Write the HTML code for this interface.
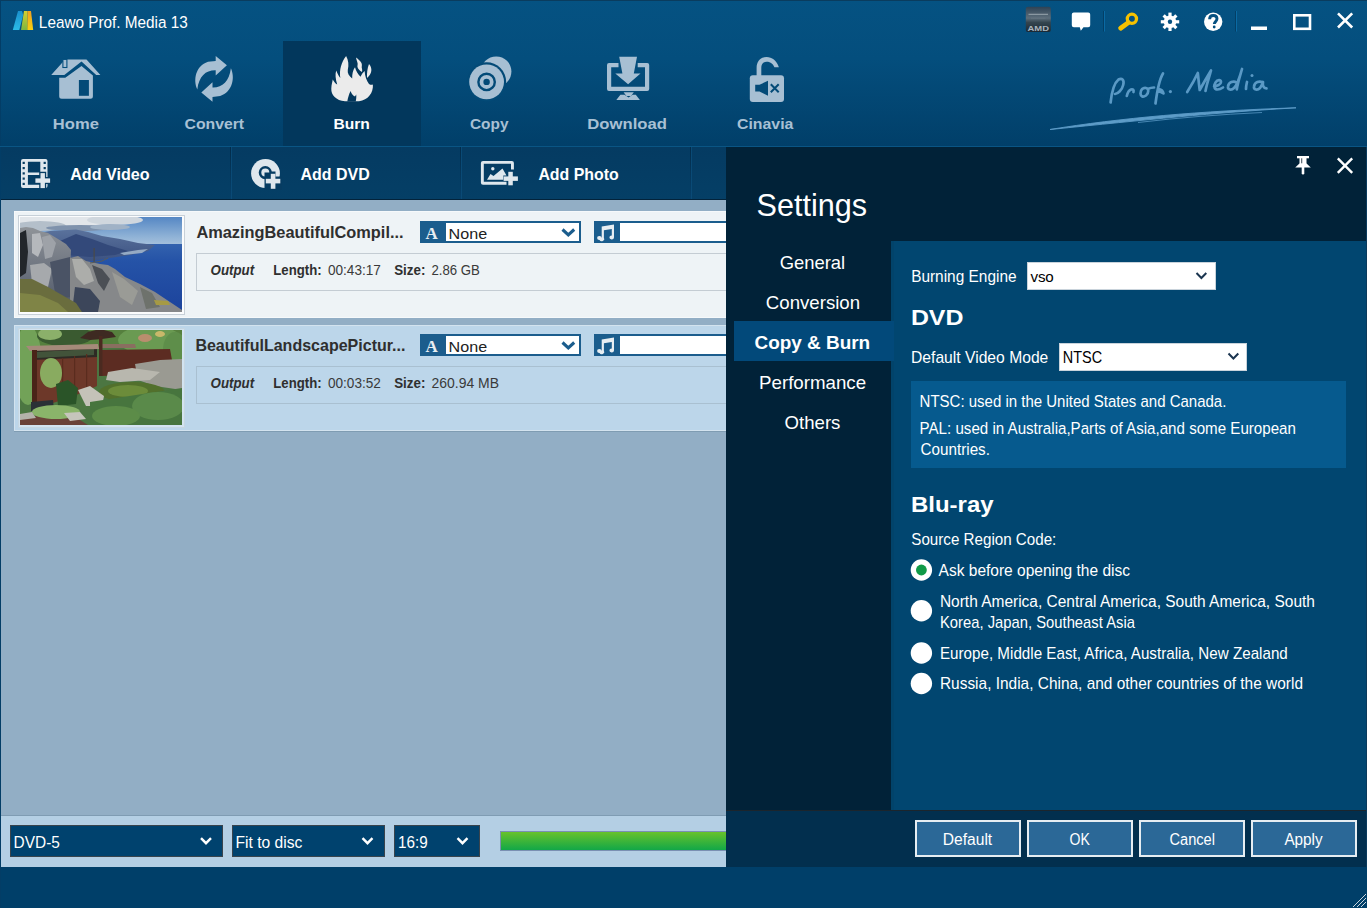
<!DOCTYPE html>
<html><head><meta charset="utf-8">
<style>
*{margin:0;padding:0;box-sizing:border-box}
html,body{width:1367px;height:908px;overflow:hidden;background:#003f69;font-family:"Liberation Sans",sans-serif}
.a{position:absolute}
.t{position:absolute;white-space:nowrap;line-height:1}
svg{position:absolute;overflow:visible}
</style></head><body>

<div class="a" style="left:0;top:0;width:1367px;height:147px;background:linear-gradient(#055282 0%,#044e7d 40%,#013f69 100%)"></div>
<div class="a" style="left:0;top:0;width:1367px;height:1px;background:#0a3c5e"></div>
<div class="a" style="left:0;top:0;width:1px;height:908px;background:#033d66"></div>
<div class="a" style="left:283px;top:41px;width:138px;height:106px;background:#02375c"></div>
<div class="a" style="left:0;top:146px;width:1367px;height:1px;background:#0a5584"></div>
<div class="a" style="left:1px;top:147px;width:725px;height:53px;background:linear-gradient(#053b62,#053f66)"></div>
<div class="a" style="left:1px;top:199px;width:725px;height:1px;background:#03233b"></div>
<div class="a" style="left:230px;top:147px;width:1px;height:52px;background:linear-gradient(#032c4a,#06406a)"></div><div class="a" style="left:231px;top:147px;width:1px;height:52px;background:#0a4a76"></div>
<div class="a" style="left:460px;top:147px;width:1px;height:52px;background:linear-gradient(#032c4a,#06406a)"></div><div class="a" style="left:461px;top:147px;width:1px;height:52px;background:#0a4a76"></div>
<div class="a" style="left:690px;top:147px;width:1px;height:52px;background:linear-gradient(#032c4a,#06406a)"></div><div class="a" style="left:691px;top:147px;width:1px;height:52px;background:#0a4a76"></div>
<div class="a" style="left:1px;top:200px;width:725px;height:615px;background:#92aec5"></div>
<div class="a" style="left:1px;top:815px;width:725px;height:1px;background:#7f9cb3"></div>
<div class="a" style="left:1px;top:816px;width:725px;height:51px;background:#b4cfe4"></div>
<div class="a" style="left:1px;top:867px;width:1366px;height:41px;background:#003f69"></div>
<div class="a" style="left:726px;top:147px;width:641px;height:720px;background:#012238"></div>
<div class="a" style="left:891px;top:241px;width:475px;height:569px;background:#014670"></div><div class="a" style="left:891px;top:241px;width:3px;height:569px;background:#02436a"></div>
<div class="a" style="left:734px;top:321px;width:160px;height:40px;background:#02497a"></div>
<div class="a" style="left:726px;top:810px;width:640px;height:57px;background:#022f4e;border-top:1px solid #1c252c"></div>
<div class="a" style="left:1366px;top:147px;width:1px;height:720px;background:#0a3a5c"></div>

<!-- file items -->
<div class="a" style="left:14px;top:211px;width:712px;height:107px;background:#eef3f6;border:1px solid #f6f9fb;border-right:none"></div>
<div class="a" style="left:18px;top:215px;width:167px;height:100px;background:#fbfcfd;border:1px solid #c7d0d8"></div>
<div class="a" style="left:196px;top:253px;width:530px;height:38px;border:1px solid #c4ccd3;border-right:none"></div>

<div class="a" style="left:14px;top:325px;width:712px;height:106px;background:#bcd6ea;border:1px solid #d3e3ef;border-right:none"></div><div class="a" style="left:14px;top:431px;width:712px;height:1px;background:#7f9cb2"></div>
<div class="a" style="left:18px;top:328px;width:167px;height:100px;background:#d2e3f0;border:1px solid #c5d6e2"></div>
<div class="a" style="left:196px;top:366px;width:530px;height:38px;border:1px solid #a9c0d1;border-right:none"></div>

<!-- subtitle/audio combos -->
<div class="a" style="left:420px;top:221px;width:161px;height:22px;background:#fff;border:2px solid #1b5d8d"></div>
<div class="a" style="left:420px;top:221px;width:26px;height:22px;background:#1b5d8d"></div>
<div class="a" style="left:594px;top:221px;width:132px;height:22px;background:#fff;border:2px solid #1b5d8d;border-right:none"></div>
<div class="a" style="left:594px;top:221px;width:26px;height:22px;background:#1b5d8d"></div>
<div class="a" style="left:420px;top:334px;width:161px;height:22px;background:#fff;border:2px solid #1b5d8d"></div>
<div class="a" style="left:420px;top:334px;width:26px;height:22px;background:#1b5d8d"></div>
<div class="a" style="left:594px;top:334px;width:132px;height:22px;background:#fff;border:2px solid #1b5d8d;border-right:none"></div>
<div class="a" style="left:594px;top:334px;width:26px;height:22px;background:#1b5d8d"></div>

<!-- bottom combos -->
<div class="a" style="left:10px;top:825px;width:213px;height:32px;background:#00426e;border:1px solid #39444d"></div>
<div class="a" style="left:232px;top:825px;width:153px;height:32px;background:#00426e;border:1px solid #39444d"></div>
<div class="a" style="left:394px;top:825px;width:86px;height:32px;background:#00426e;border:1px solid #39444d"></div>
<div class="a" style="left:500px;top:831px;width:226px;height:20px;background:linear-gradient(#68c22a,#12a748);border:1px solid #7a90b2;border-right:none"></div>

<!-- settings combos -->
<div class="a" style="left:1027px;top:262px;width:189px;height:28px;background:#fff;border:1px solid #c9d3db"></div>
<div class="a" style="left:1059px;top:343px;width:188px;height:28px;background:#fff;border:1px solid #c9d3db"></div>
<div class="a" style="left:911px;top:381px;width:435px;height:87px;background:#065a8e"></div>

<!-- buttons -->
<div class="a" style="left:915px;top:820px;width:106px;height:37px;background:#2b6897;border:2px solid #e6edf2"></div>
<div class="a" style="left:1027px;top:820px;width:106px;height:37px;background:#2b6897;border:2px solid #e6edf2"></div>
<div class="a" style="left:1139px;top:820px;width:106px;height:37px;background:#2b6897;border:2px solid #e6edf2"></div>
<div class="a" style="left:1251px;top:820px;width:106px;height:37px;background:#2b6897;border:2px solid #e6edf2"></div>
<svg style="left:0;top:0;font-family:'Liberation Sans'" width="1367" height="908">
<text transform="translate(38.87 27.80) scale(0.9289 1)" fill="#fff" style="font-size:16.5px;">Leawo Prof. Media 13</text>
<text transform="translate(52.81 128.70) scale(1.0883 1)" fill="#a8c0d4" style="font-size:15.25px;font-weight:bold;">Home</text>
<text transform="translate(184.50 128.70) scale(1.0340 1)" fill="#a8c0d4" style="font-size:15.25px;font-weight:bold;">Convert</text>
<text transform="translate(333.48 128.90) scale(1.0244 1)" fill="#fff" style="font-size:15.25px;font-weight:bold;">Burn</text>
<text transform="translate(470.00 128.70) scale(1.0092 1)" fill="#a8c0d4" style="font-size:15.25px;font-weight:bold;">Copy</text>
<text transform="translate(587.31 128.70) scale(1.0945 1)" fill="#a8c0d4" style="font-size:15.25px;font-weight:bold;">Download</text>
<text transform="translate(737.00 128.70) scale(1.0390 1)" fill="#a8c0d4" style="font-size:15.25px;font-weight:bold;">Cinavia</text>
<text transform="translate(70.20 179.90) scale(0.9778 1)" fill="#fff" style="font-size:16.5px;font-weight:bold;">Add Video</text>
<text transform="translate(300.40 179.90) scale(0.9696 1)" fill="#fff" style="font-size:16.5px;font-weight:bold;">Add DVD</text>
<text transform="translate(538.40 179.90) scale(0.9638 1)" fill="#fff" style="font-size:16.5px;font-weight:bold;">Add Photo</text>
<text transform="translate(196.40 237.70) scale(1.0395 1)" fill="#2f2f2f" style="font-size:15.75px;font-weight:bold;">AmazingBeautifulCompil...</text>
<text transform="translate(210.60 274.70) scale(0.9324 1)" fill="#2f2f2f" style="font-size:14.25px;font-weight:bold;font-style:italic;">Output</text>
<text transform="translate(273.30 274.70) scale(0.9264 1)" fill="#2f2f2f" style="font-size:14.25px;font-weight:bold;">Length:</text>
<text transform="translate(328.00 274.70) scale(0.9542 1)" fill="#3a3a3a" style="font-size:14.25px;">00:43:17</text>
<text transform="translate(394.20 274.70) scale(0.9381 1)" fill="#2f2f2f" style="font-size:14.25px;font-weight:bold;">Size:</text>
<text transform="translate(431.50 274.70) scale(0.9270 1)" fill="#3a3a3a" style="font-size:14.25px;">2.86 GB</text>
<text transform="translate(448.60 238.50) scale(1.0952 1)" fill="#222" style="font-size:14.75px;">None</text>
<text transform="translate(195.38 350.70) scale(1.0186 1)" fill="#2f2f2f" style="font-size:15.75px;font-weight:bold;">BeautifulLandscapePictur...</text>
<text transform="translate(210.60 387.70) scale(0.9324 1)" fill="#2f2f2f" style="font-size:14.25px;font-weight:bold;font-style:italic;">Output</text>
<text transform="translate(273.30 387.70) scale(0.9264 1)" fill="#2f2f2f" style="font-size:14.25px;font-weight:bold;">Length:</text>
<text transform="translate(328.00 387.70) scale(0.9542 1)" fill="#3a3a3a" style="font-size:14.25px;">00:03:52</text>
<text transform="translate(394.20 387.70) scale(0.9381 1)" fill="#2f2f2f" style="font-size:14.25px;font-weight:bold;">Size:</text>
<text transform="translate(431.50 387.70) scale(0.9793 1)" fill="#3a3a3a" style="font-size:14.25px;">260.94 MB</text>
<text transform="translate(448.60 351.50) scale(1.0952 1)" fill="#222" style="font-size:14.75px;">None</text>
<text transform="translate(13.62 847.90) scale(0.9807 1)" fill="#fff" style="font-size:15.75px;">DVD-5</text>
<text transform="translate(235.51 847.90) scale(0.9922 1)" fill="#fff" style="font-size:15.75px;">Fit to disc</text>
<text transform="translate(398.03 847.90) scale(0.9701 1)" fill="#fff" style="font-size:15.75px;">16:9</text>
<text transform="translate(756.54 216.00) scale(0.9567 1)" fill="#fff" style="font-size:32.0px;">Settings</text>
<text transform="translate(779.70 269.00) scale(0.9567 1)" fill="#fff" style="font-size:19.25px;">General</text>
<text transform="translate(765.80 309.00) scale(0.9694 1)" fill="#fff" style="font-size:19.25px;">Conversion</text>
<text transform="translate(754.50 349.00) scale(0.9840 1)" fill="#fff" style="font-size:19.25px;font-weight:bold;">Copy &amp; Burn</text>
<text transform="translate(759.03 389.00) scale(0.9724 1)" fill="#fff" style="font-size:19.25px;">Performance</text>
<text transform="translate(784.50 429.00) scale(0.9677 1)" fill="#fff" style="font-size:19.25px;">Others</text>
<text transform="translate(911.14 282.10) scale(0.9639 1)" fill="#fff" style="font-size:16.0px;">Burning Engine</text>
<text transform="translate(1030.60 282.10) scale(0.9787 1)" fill="#000" style="font-size:15.5px;letter-spacing:-0.300px;">vso</text>
<text transform="translate(910.91 325.00) scale(1.0943 1)" fill="#fff" style="font-size:22.75px;font-weight:bold;">DVD</text>
<text transform="translate(911.02 362.70) scale(0.9796 1)" fill="#fff" style="font-size:16.0px;">Default Video Mode</text>
<text transform="translate(1062.70 362.70) scale(0.9048 1)" fill="#000" style="font-size:16.0px;">NTSC</text>
<text transform="translate(919.58 406.90) scale(0.9241 1)" fill="#fff" style="font-size:16.25px;">NTSC: used in the United States and Canada.</text>
<text transform="translate(919.57 433.60) scale(0.9316 1)" fill="#fff" style="font-size:16.25px;">PAL: used in Australia,Parts of Asia,and some European</text>
<text transform="translate(920.50 454.70) scale(0.9382 1)" fill="#fff" style="font-size:16.25px;">Countries.</text>
<text transform="translate(910.95 511.80) scale(1.0550 1)" fill="#fff" style="font-size:22.75px;font-weight:bold;">Blu-ray</text>
<text transform="translate(911.30 545.00) scale(0.9489 1)" fill="#fff" style="font-size:16.0px;">Source Region Code:</text>
<text transform="translate(938.60 575.90) scale(0.9698 1)" fill="#fff" style="font-size:16.0px;">Ask before opening the disc</text>
<text transform="translate(939.93 607.00) scale(0.9676 1)" fill="#fff" style="font-size:16.0px;">North America, Central America, South America, South</text>
<text transform="translate(939.97 628.00) scale(0.9251 1)" fill="#fff" style="font-size:16.0px;">Korea, Japan, Southeast Asia</text>
<text transform="translate(939.95 658.60) scale(0.9501 1)" fill="#fff" style="font-size:16.0px;">Europe, Middle East, Africa, Australia, New Zealand</text>
<text transform="translate(939.93 689.00) scale(0.9655 1)" fill="#fff" style="font-size:16.0px;">Russia, India, China, and other countries of the world</text>
<text transform="translate(942.74 845.00) scale(0.9613 1)" fill="#fff" style="font-size:16.25px;">Default</text>
<text transform="translate(1069.50 845.00) scale(0.8672 1)" fill="#fff" style="font-size:16.25px;">OK</text>
<text transform="translate(1169.50 845.00) scale(0.8985 1)" fill="#fff" style="font-size:16.25px;">Cancel</text>
<text transform="translate(1284.40 845.00) scale(0.9392 1)" fill="#fff" style="font-size:16.25px;">Apply</text>
</svg><!-- logo -->
<svg style="left:0;top:0" width="1367" height="147" viewBox="0 0 1367 147">
<defs>
<linearGradient id="lgb" x1="0" y1="0" x2="0" y2="1"><stop offset="0" stop-color="#1a8fcc"/><stop offset="1" stop-color="#2bbbe8"/></linearGradient>
<linearGradient id="lgg" x1="0" y1="0" x2="0" y2="1"><stop offset="0" stop-color="#d6d030"/><stop offset="1" stop-color="#7cb540"/></linearGradient>
<linearGradient id="lgy" x1="0" y1="0" x2="0" y2="1"><stop offset="0" stop-color="#f0a020"/><stop offset="1" stop-color="#f8d010"/></linearGradient>
</defs>
<polygon points="12.8,30 18,11 22,11 23.2,15 19.3,30" fill="url(#lgb)"/>
<polygon points="21,30 24,11 27.6,11 27.3,30" fill="url(#lgg)"/>
<polygon points="27.3,30 27.6,11 31,11 33.2,30" fill="url(#lgy)"/>

<!-- home -->
<g fill="#a7bfd3">
<polygon points="51.2,74.9 65.1,59.4 86.5,59.4 100.4,74.9 96.2,74.9 81.5,61.4 64.3,74.9"/>
<path d="M59.2,77.8 L65.3,77.8 L81.5,65.9 L92.9,75.6 L92.9,96.2 Q92.9,98.7 90.4,98.7 L61.7,98.7 Q59.2,98.7 59.2,96.2 Z"/>
<rect x="62.9" y="59.4" width="4" height="8.1" stroke="#054f7e" stroke-width="1.1"/>
</g>
<rect x="78.9" y="80" width="10" height="15.8" fill="#044a77"/>

<!-- convert -->
<g fill="#a7bfd3">
<path id="cva" d="M197.3,89.5 C193,80 195.5,66 208,61.8 L215.7,60.9 L215.7,56.1 L226.9,65.3 L215.7,75.6 L215.7,70.3 C206,70 199,76 197.3,89.5 Z"/>
<use href="#cva" transform="rotate(180 214.1 78.9)"/>
</g>

<!-- burn flame -->
<g transform="translate(325 50)">
<path fill="#ebebeb" d="M20,51.3 C11,50.5 6,45 6.3,38.5 C6.5,34 7.5,31.5 7.7,29.4 C9,31.5 10.5,33.5 12.2,34.5 C10.5,29 10,24 11.2,20.4 C12.5,23.5 13.8,26 15.3,28 C14,20 16.5,12 21.1,6 C23.5,10 24,15 22.8,20 C22.2,23 24,26 27.2,28.4 C27,24 28,20 30,17.3 C31,21 33,24.5 35.5,26.8 C36.5,24.5 38,22.5 39.6,21 C40,26 41.5,31 44,33.9 C45.5,35 46.8,35 47.9,34.5 C48.5,43 43,50 34,51.3 Z"/>
<path fill="#ebebeb" d="M31,7.5 C35,10.5 37.5,13 36.8,16 C36.3,18 37.8,19.5 37,22 C33.8,20 31.8,17.5 32.6,15 C33.2,13 31.5,10.5 31,7.5 Z"/>
<path fill="#ebebeb" d="M44,14 C47.5,18 47.3,23.5 42,28 C41.8,23 42.3,18 44,14 Z"/>
<path fill="#02375c" d="M22.3,51.5 C23,47.5 24,44 25.6,41 C26.5,44 28,45.5 30,46.5 L31.2,44.5 C31.5,47 31.2,49.5 30.7,51.5 Z"/>
</g>

<!-- copy -->
<g>
<circle cx="496.2" cy="71.6" r="15.2" fill="#a7bfd3"/>
<circle cx="486.6" cy="81.9" r="19.6" fill="#034a77"/>
<circle cx="486.6" cy="81.9" r="17.4" fill="#a7bfd3"/>
<circle cx="486.6" cy="81.9" r="8.2" fill="none" stroke="#034a77" stroke-width="2.4"/>
<circle cx="486.6" cy="81.9" r="3.2" fill="#034a77"/>
</g>

<!-- download -->
<g fill="#a7bfd3">
<path fill-rule="evenodd" d="M609,63.1 L618.5,63.1 L618.5,67.3 L611.2,67.3 L611.2,86.7 L645,86.7 L645,67.3 L637.7,67.3 L637.7,63.1 L647.2,63.1 Q649.2,63.1 649.2,65.1 L649.2,88.9 Q649.2,90.9 647.2,90.9 L609,90.9 Q607,90.9 607,88.9 L607,65.1 Q607,63.1 609,63.1 Z"/>
<polygon points="619.2,56.7 637,56.7 633.8,73.6 640.5,73.6 628.1,84.2 615.3,73.6 622.4,73.6"/>
<polygon points="623.6,92.2 633.8,92.2 631,96 626.4,96"/>
<polygon points="620.4,94.8 624.5,94.8 628.6,97.5 632.5,94.8 635.8,94.8 639.9,100.1 616.3,100.1"/>
</g>

<!-- cinavia -->
<g>
<path d="M756.6,77 L756.6,68 C756.6,61 761,57 766.6,57 C772,57 776.5,60.5 778.9,67.2 L774.4,67.2 C772.5,63 770,61.7 766.6,61.7 C763,61.7 761.3,64 761.3,68 L761.3,77 Z" fill="#a7bfd3"/>
<rect x="749.8" y="75.2" width="34.2" height="26.8" rx="3" fill="#a7bfd3"/>
<polygon points="755.2,84.8 759.5,84.8 768,80.7 768,95.7 759.5,91.5 755.2,91.5" fill="#034a77"/>
<path d="M770.8,84.3 L778.7,92.3 M778.7,84.3 L770.8,92.3" stroke="#034a77" stroke-width="2" fill="none"/>
</g>

<!-- top right icons -->
<defs>
<linearGradient id="amd" x1="0" y1="0" x2="0" y2="1"><stop offset="0" stop-color="#2e4254"/><stop offset="0.45" stop-color="#5d6e7b"/><stop offset="0.62" stop-color="#34454f"/><stop offset="1" stop-color="#1a2834"/></linearGradient>
</defs>
<rect x="1025.8" y="6.7" width="25" height="25.4" rx="2" fill="url(#amd)"/>
<rect x="1028.5" y="13.8" width="19.5" height="1" fill="#9aa6ae"/>
<rect x="1031" y="17.8" width="14.5" height="0.6" fill="#6c7a85"/>
<text x="1027.5" y="31" font-family="Liberation Sans" font-weight="bold" font-size="7.5" fill="#a9b4bc" textLength="21.5" lengthAdjust="spacingAndGlyphs">AMD</text>
<path d="M1073.8,12.5 L1088.2,12.5 Q1090.2,12.5 1090.2,14.5 L1090.2,25.2 Q1090.2,27.2 1088.2,27.2 L1083.5,27.2 L1080.8,30.7 L1079.8,27.2 L1073.8,27.2 Q1071.8,27.2 1071.8,25.2 L1071.8,14.5 Q1071.8,12.5 1073.8,12.5 Z" fill="#fff"/>
<rect x="1103" y="11" width="1" height="20.5" fill="#033f66"/><rect x="1104" y="11" width="1" height="20.5" fill="#0a6aa4"/>
<rect x="1235" y="11" width="1" height="20.5" fill="#033f66"/><rect x="1236" y="11" width="1" height="20.5" fill="#0a6aa4"/>
<g fill="none" stroke="#f6c100">
<circle cx="1131.9" cy="18.8" r="4.6" stroke-width="3.3"/>
<line x1="1128.3" y1="22.6" x2="1120.6" y2="28.2" stroke-width="4.8" stroke-linecap="round"/>
</g>
<g transform="translate(1170 21.8)" fill="#fff">
<circle r="6.3" />
<rect x="-1.6" y="-9.2" width="3.2" height="18.4"/>
<rect x="-9.2" y="-1.6" width="18.4" height="3.2"/>
<rect x="-1.6" y="-9" width="3.2" height="18" transform="rotate(45)"/>
<rect x="-1.6" y="-9" width="3.2" height="18" transform="rotate(-45)"/>
<circle r="2.2" fill="#055080"/>
</g>
<circle cx="1213.2" cy="21.8" r="9.2" fill="#fff"/>
<path d="M1209.6,19.3 C1209.6,16.8 1211.2,15.5 1213.3,15.5 C1215.6,15.5 1217,16.9 1217,18.8 C1217,21.2 1214.4,21.6 1214.3,24" fill="none" stroke="#055080" stroke-width="2.9"/>
<circle cx="1214.2" cy="27" r="1.4" fill="#055080"/>
<rect x="1251" y="26.5" width="16" height="3.5" fill="#fff"/>
<rect x="1294.3" y="15.3" width="15.7" height="13.5" fill="none" stroke="#fff" stroke-width="2.6"/>
<path d="M1338,13.3 L1352.2,27.5 M1352.2,13.3 L1338,27.5" stroke="#fff" stroke-width="2.6" fill="none"/>

<!-- prof media logo -->
<g fill="none" stroke="#5a99c5" stroke-width="2.7" stroke-linecap="round" stroke-linejoin="round">
<path d="M1110.6,102.5 C1111.5,94 1113,84 1118.5,79.5 C1122,77.5 1124.5,80 1123.2,85 C1122,90 1118,93.5 1115,94"/>
<path d="M1126.8,96 C1127.5,93 1128.5,90.5 1131,89.5 C1133,89 1134,90 1133.5,92"/>
<path d="M1140.5,93.5 C1140.5,89.5 1143,87.5 1146,88 C1149,88.5 1149,93 1146,95.5 C1143,97.5 1140.5,96.5 1140.5,93.5 Z M1147.5,89 C1150,88 1152,87.5 1154,87.5"/>
<path d="M1163,73.5 C1159,80 1157,92 1155.5,103.5 M1159,89 C1161.5,89.5 1163,91 1163.5,93.5 C1162,92.5 1160,91.5 1158.5,91.5"/>
<path d="M1187.2,92 C1191,86 1195,79 1197.8,73 C1198.5,79 1199,85 1199.7,90 C1203,84 1207,77 1211,70.5 C1209,78 1206.5,85 1205.5,91"/>
<path d="M1214,86 C1217,86 1221,84.5 1221,82 C1221,79.5 1217.5,79.5 1215.5,82.5 C1213.5,85.5 1214,89.5 1217.5,89.5 C1219.5,89.5 1221.5,88.5 1223,87.5"/>
<path d="M1236.5,82.5 C1233.5,80.5 1228.5,82 1228,86.5 C1227.5,90 1231.5,90.5 1234,88 C1237,85 1239.5,78 1242,69 C1240,76 1237.5,84 1236.8,89.3"/>
<path d="M1247,82 C1246.5,84 1246,87 1246,89"/>
<path d="M1262.5,82.5 C1259.5,80.5 1254.5,82 1254,86.5 C1253.5,90 1257.5,90.5 1260,88 C1261.5,86 1262.5,84 1263,82 C1262.5,85 1263,88 1266.5,88.3"/>
</g>
<circle cx="1170.4" cy="91.6" r="1.6" fill="#5a99c5"/>
<circle cx="1252" cy="75.4" r="1.5" fill="#5a99c5"/>
<path d="M1050,129.5 C1120,118 1200,111 1296,107.8 C1210,113 1150,119.5 1050,129.5 Z" fill="#5d9cc8" stroke="#5d9cc8" stroke-width="0.9"/>
<path d="M1138,122.5 C1180,117.5 1220,114.5 1262,112.5" stroke="#4e8dba" stroke-width="0.9" fill="none"/>
</svg>
<svg style="left:0;top:0" width="1367" height="908" viewBox="0 0 1367 908">
<!-- add video -->
<path fill="#dfe7ed" fill-rule="evenodd" d="M23,159 L45.5,159 Q47.5,159 47.5,161 L47.5,186 Q47.5,188 45.5,188 L23,188 Q21,188 21,186 L21,161 Q21,159 23,159 Z M27.9,161.7 L40.3,161.7 L40.3,172.5 L27.9,172.5 Z M27.9,175 L40.3,175 L40.3,184.8 L27.9,184.8 Z"/>
<g fill="#063c62">
<rect x="22.6" y="161.8" width="2.2" height="2.2"/><rect x="22.6" y="167" width="2.2" height="2.2"/><rect x="22.6" y="172.3" width="2.2" height="2.2"/><rect x="22.6" y="177.5" width="2.2" height="2.2"/><rect x="22.6" y="182.8" width="2.2" height="2.2"/>
<rect x="43.6" y="161.8" width="2.2" height="2.2"/><rect x="43.6" y="167" width="2.2" height="2.2"/>
<path d="M39.2,171.8 L46.2,171.8 L46.2,177.1 L51.4,177.1 L51.4,184.1 L46.2,184.1 L46.2,189.4 L39.2,189.4 L39.2,184.1 L34.1,184.1 L34.1,177.1 L39.2,177.1 Z"/>
</g>
<g fill="#dfe7ed">
<rect x="40.5" y="173.1" width="4.4" height="15"/>
<rect x="35.4" y="178.4" width="14.7" height="4.4"/>
</g>
<!-- add dvd -->
<circle cx="265.5" cy="173.5" r="14.4" fill="#dfe7ed"/>
<circle cx="265.3" cy="172.6" r="5.3" fill="none" stroke="#063c62" stroke-width="2.6"/>
<path d="M264.5,172.5 L270.7,172.5 L270.7,171.5 L275.5,171.5 L275.5,176.5 L282,176.5 L282,190 L264.5,190 Z" fill="#063c62"/>
<g fill="#dfe7ed">
<rect x="270.8" y="173.8" width="4.6" height="15"/>
<rect x="265.8" y="178.8" width="14.5" height="4.6"/>
</g>
<!-- add photo -->
<path fill-rule="evenodd" d="M483,160.9 L511.9,160.9 Q513.9,160.9 513.9,162.9 L513.9,169.5 L511,169.5 L511,163.8 L483.8,163.8 L483.8,181.8 L506.5,181.8 L506.5,184.7 L483,184.7 Q480.9,184.7 480.9,182.7 L480.9,162.9 Q480.9,160.9 483,160.9 Z" fill="#dfe7ed"/>
<circle cx="492.8" cy="168.8" r="1.7" fill="#dfe7ed"/>
<polygon points="487,179.7 490.5,174 493.5,176 502.5,168.5 506.5,175.5 503.3,175.5 503.3,179.7" fill="#dfe7ed"/>
<g fill="#dfe7ed">
<rect x="508.3" y="171.8" width="4.5" height="13.5"/>
<rect x="503.6" y="176.4" width="14.3" height="4.5"/>
</g>

<!-- subtitle A icons -->
<g fill="#e8eef2" font-family="Liberation Serif" font-weight="bold" font-size="17">
<text x="425.5" y="239.2">A</text>
<text x="425.5" y="352.2">A</text>
</g>
<!-- music icons -->
<g fill="#e8eef2">
<path d="M599.5,240 a2.3,2 0 1,1 2.2,-2.1 L601.7,226.5 L614,224.6 L614,237.5 a2.3,2 0 1,1 -2.2,-2.1 L611.8,229 L603.9,230.2 L603.9,238 a2.3,2 0 0,1 -4.4,2 Z"/>
<path d="M599.5,353 a2.3,2 0 1,1 2.2,-2.1 L601.7,339.5 L614,337.6 L614,350.5 a2.3,2 0 1,1 -2.2,-2.1 L611.8,342 L603.9,343.2 L603.9,351 a2.3,2 0 0,1 -4.4,2 Z"/>
</g>
<!-- chevrons -->
<g fill="none" stroke="#1b5d8d" stroke-width="3.1">
<path d="M562.5,229.5 L568.3,234.8 L574.2,229.5"/>
<path d="M562.5,342.5 L568.3,347.8 L574.2,342.5"/>
</g>
<g fill="none" stroke="#fff" stroke-width="2.4">
<path d="M201,838.2 L206,843.2 L211,838.2"/>
<path d="M362.5,838.2 L367.5,843.2 L372.5,838.2"/>
<path d="M457.5,838.2 L462.5,843.2 L467.5,838.2"/>
</g>
<g fill="none" stroke="#1b3550" stroke-width="2">
<path d="M1196.5,273 L1201.4,278 L1206.3,273"/>
<path d="M1228.5,353.5 L1233.4,358.5 L1238.3,353.5"/>
</g>
<!-- pin -->
<g fill="#fff">
<rect x="1297" y="156" width="12" height="2.3"/>
<rect x="1299.5" y="158" width="7" height="6"/>
<polygon points="1299.5,163.5 1306.5,163.5 1310.8,167.5 1295.2,167.5"/>
<polygon points="1301.7,167 1304.3,167 1304.3,173.3 1303,175 1301.7,173.3"/>
</g>
<rect x="1301" y="158.3" width="1.3" height="5" fill="#65717b"/>
<path d="M1337.8,158.3 L1352.2,172.8 M1352.2,158.3 L1337.8,172.8" stroke="#fff" stroke-width="2.4" fill="none"/>
<!-- radios -->
<circle cx="921.4" cy="570" r="10.7" fill="#fff"/>
<circle cx="921.4" cy="570" r="5.4" fill="#109a48"/>
<circle cx="921.4" cy="610.7" r="10.7" fill="#fff"/>
<circle cx="921.4" cy="653" r="10.7" fill="#fff"/>
<circle cx="921.4" cy="683.5" r="10.7" fill="#fff"/>
<!-- grip -->
<g stroke="#c9d4dc" stroke-width="1">
<path d="M1353,907 L1366,894 M1357,907 L1366,898 M1361,907 L1366,902"/>
</g>
</svg>
<!-- thumbnail 1 -->
<svg style="left:20px;top:217px;overflow:hidden" width="162" height="95" viewBox="0 0 162 95">
<defs>
<linearGradient id="sky1" x1="0" y1="0" x2="0" y2="1"><stop offset="0" stop-color="#5587c4"/><stop offset="0.7" stop-color="#8fb2d6"/><stop offset="1" stop-color="#a6c1dc"/></linearGradient>
<linearGradient id="sea1" x1="0" y1="0" x2="0" y2="1"><stop offset="0" stop-color="#3362ae"/><stop offset="0.25" stop-color="#2553a7"/><stop offset="1" stop-color="#1c439c"/></linearGradient>
<linearGradient id="mt1" x1="0" y1="0" x2="0" y2="1"><stop offset="0" stop-color="#5a729c"/><stop offset="1" stop-color="#3a5080"/></linearGradient>
<linearGradient id="rk1" x1="0" y1="0" x2="0" y2="1"><stop offset="0" stop-color="#8f9398"/><stop offset="1" stop-color="#50596a"/></linearGradient>
</defs>
<rect width="162" height="28" fill="url(#sky1)"/>
<ellipse cx="40" cy="4" rx="52" ry="8" fill="#e2e6ea"/>
<ellipse cx="95" cy="3" rx="28" ry="5" fill="#d0d7de"/>
<ellipse cx="20" cy="9" rx="26" ry="5" fill="#b4bfca"/>
<ellipse cx="60" cy="11" rx="34" ry="3" fill="#7f92ac"/>
<ellipse cx="90" cy="10" rx="20" ry="3" fill="#a0b2c6"/>
<rect x="0" y="27" width="162" height="68" fill="url(#sea1)"/>
<polygon points="10,18 30,14 47,13 56,12.5 68,15 82,19 100,22 118,26 135,28 128,34 110,38 90,41 60,46 10,45" fill="url(#mt1)"/>
<polygon points="40,24 56,17 72,22 88,28 108,34 95,38 70,40 45,38" fill="#33497a"/>
<polygon points="100,36 118,33 128,32 122,36 104,38" fill="#95aac4"/>
<polygon points="0,11 6,10 13,11 20,14 28,16 38,22 46,27 51,33 50,55 52,85 40,90 0,88" fill="url(#rk1)"/>
<polygon points="0,16 6,13 8,35 6,56 0,60" fill="#22262b"/>
<polygon points="12,17 20,16 23,28 18,40 12,36" fill="#b5b8bc"/>
<polygon points="22,20 30,18 36,26 32,40 25,42" fill="#9ea2a8"/>
<polygon points="10,48 24,46 32,52 28,70 12,66" fill="#a6a9ac"/>
<polygon points="30,45 50,40 51,80 36,82" fill="#4a5365"/>
<polygon points="50,41 58,39 66,44 80,47 88,48 95,52 105,60 120,67 135,75 150,85 162,93 162,95 50,95" fill="#86888a"/>
<polygon points="52,42 62,42 70,52 74,64 64,68 56,60" fill="#acadaa"/>
<polygon points="72,48 82,52 90,62 84,74 78,66" fill="#4b4f55"/>
<polygon points="92,55 104,62 118,74 112,88 100,80" fill="#9a9b96"/>
<polygon points="55,70 70,72 80,84 78,95 52,95" fill="#3c465a"/>
<polygon points="120,70 132,76 140,90 126,92" fill="#6e726c"/>
<polygon points="0,62 12,62 28,70 42,78 56,86 62,95 0,95" fill="#6a6d3e"/>
<polygon points="0,76 20,78 38,86 48,95 0,95" fill="#7f8446"/>
<polygon points="134,83 148,84 150,88 136,88" fill="#a69a44"/>
<rect x="73.5" y="31" width="1.2" height="14" fill="#4a4a48"/>
<path d="M70,46 L82,44 L88,41" stroke="#5a5c58" stroke-width="1" fill="none"/>
</svg>
<!-- thumbnail 2 -->
<svg style="left:20px;top:330px;overflow:hidden" width="162" height="95" viewBox="0 0 162 95">
<rect width="162" height="95" fill="#4c7642"/>
<rect width="162" height="18" fill="#56803e"/>
<ellipse cx="8" cy="35" rx="14" ry="40" fill="#72a258"/>
<ellipse cx="45" cy="6" rx="28" ry="10" fill="#3a5a30"/>
<ellipse cx="30" cy="4" rx="12" ry="6" fill="#8bb06a"/>
<ellipse cx="130" cy="10" rx="32" ry="14" fill="#6a9a52"/>
<ellipse cx="155" cy="20" rx="12" ry="18" fill="#5e8e4a"/>
<ellipse cx="125" cy="8" rx="7" ry="4" fill="#b98e6e"/>
<ellipse cx="140" cy="4" rx="5" ry="3" fill="#c9b86a"/>
<polygon points="82,20 150,19 152,30 150,42 120,44 82,46" fill="#5c2c22"/>
<polygon points="82,14 115,14 116,18 82,18" fill="#8a6e60"/>
<polygon points="60,8 68,2 80,-1 92,2 96,7 82,9 70,10" fill="#3e2a22"/>
<rect x="79" y="6" width="3.5" height="40" fill="#4a2a20"/>
<polygon points="12,28 77,22 77,56 64,62 48,68 30,74 12,78" fill="#6d3829"/>
<polygon points="12,20 77,17 77,27 12,30" fill="#2e2a24"/>
<polygon points="16,22 74,19 74,25 16,28" fill="#50704a" opacity="0.6"/>
<polygon points="6,16 78,14 79,19 10,21" fill="#a58a7a"/>
<rect x="12" y="20" width="5" height="60" fill="#4a2418"/>
<rect x="42" y="28" width="1.2" height="42" fill="#5a2c1e"/>
<rect x="54" y="26" width="1.2" height="38" fill="#5a2c1e"/>
<rect x="66" y="24" width="1.2" height="34" fill="#5a2c1e"/>
<ellipse cx="31" cy="43" rx="11" ry="15" fill="#8cb866" opacity="0.9"/>
<polygon points="11,72 33,70 34,80 11,81" fill="#2a3036"/>
<polygon points="36,54 48,50 58,58 56,74 38,76" fill="#2a5428"/>
<polygon points="115,34 140,30 162,29 162,60 135,56 118,50" fill="#9a9a92"/>
<polygon points="88,42 112,38 140,42 130,50 100,52 86,50" fill="#b8b7ae"/>
<ellipse cx="112" cy="62" rx="33" ry="10" fill="#52702c"/>
<ellipse cx="108" cy="61" rx="20" ry="6" fill="#6c8c3a"/>
<polygon points="58,60 70,56 84,66 82,76 66,76" fill="#c4c2b8"/>
<polygon points="70,72 162,58 162,95 70,95" fill="#47753e"/>
<ellipse cx="138" cy="76" rx="26" ry="14" fill="#5a8a4a"/>
<ellipse cx="96" cy="86" rx="24" ry="10" fill="#5c8c48"/>
<polygon points="0,86 30,86 60,90 68,95 0,95" fill="#6a4238"/>
<ellipse cx="36" cy="82" rx="24" ry="7" fill="#8ab46a"/>
<polygon points="0,84 12,82 16,88 0,90" fill="#b4b2aa"/>
<polygon points="44,83 60,82 66,89 50,91" fill="#c6c5bc"/>
</svg>
</body></html>
